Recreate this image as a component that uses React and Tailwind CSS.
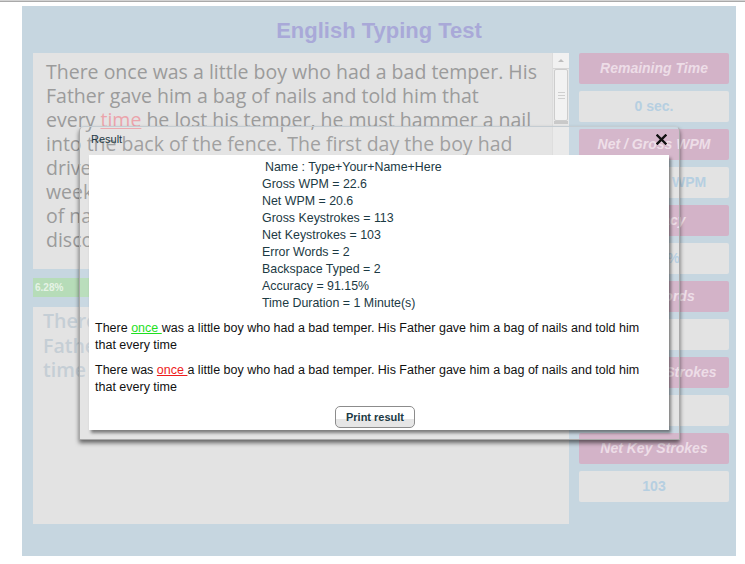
import React from 'react';

const stats = [
  'Gross WPM = 22.6',
  'Net WPM = 20.6',
  'Gross Keystrokes = 113',
  'Net Keystrokes = 103',
  'Error Words = 2',
  'Backspace Typed = 2',
  'Accuracy = 91.15%',
  'Time Duration = 1 Minute(s)',
];

const sideBoxes = [
  ['Remaining Time', '0 sec.'],
  ['Net / Gross WPM', '20.6 / 22.6 WPM'],
  ['Accuracy', '91.15 %'],
  ['Error Words', '2'],
  ['Gross Key Strokes', '113'],
  ['Net Key Strokes', '103'],
];

function Scrollbar() {
  return (
    <div className="w-[17px] flex flex-col bg-[#e9e9e9] border-l border-[#dcdcdc]">
      <div className="h-[16px] bg-[#f1f1f1] border-b border-[#d6d6d6] flex items-center justify-center">
        <div className="w-0 h-0 border-l-[3px] border-r-[3px] border-b-[3px] border-l-transparent border-r-transparent border-b-[#bdbdbd]" />
      </div>
      <div className="h-[52px] mx-[1px] bg-[#f2f2f2] border border-[#cdcdcd] rounded-[2px] flex flex-col items-center justify-center gap-[2px]">
        <div className="w-[7px] h-px bg-[#cfcfcf]" />
        <div className="w-[7px] h-px bg-[#cfcfcf]" />
        <div className="w-[7px] h-px bg-[#cfcfcf]" />
      </div>
      <div className="h-[3px] mx-[1px] bg-[#c9c9c9]" />
    </div>
  );
}

export default function App() {
  return (
    <div className="relative w-[745px] h-[564px] overflow-hidden bg-white" style={{ fontFamily: '"Liberation Sans", Arial, sans-serif' }}>
      {/* top strip */}
      <div className="h-[2px] bg-[#d3d3d3] border-b border-[#a9a9a9]" />

      {/* page panel (faded behind modal) */}
      <div className="ml-[22px] mt-[4px] w-[714px] h-[550px] bg-[#c6d6e0]">
        <h1 className="pt-[13px] h-[37px] text-center text-[22px] leading-[24px] font-bold text-[#a9a9d8]">
          English Typing Test
        </h1>
        <div className="mt-[10px] pl-[11px] flex gap-[10px]">
          <div className="w-[536px] flex flex-col">
            <div className="h-[216px] bg-[#e3e3e3] flex overflow-hidden">
              <div className="flex-1 pl-[13px] pt-[7px] text-[19.5px] leading-[24px] text-[#9b9b9b] whitespace-nowrap overflow-hidden" style={{ fontFamily: '"Open Sans", sans-serif' }}>
                <div>There once was a little boy who had a bad temper. His</div>
                <div>Father gave him a bag of nails and told him that</div>
                <div>
                  every <span className="text-[#eba4ab] underline">time</span> he lost his temper, he must hammer a nail
                </div>
                <div>into the back of the fence. The first day the boy had</div>
                <div>driven 37 nails into the fence. Over the next few</div>
                <div>weeks, as he learned to control his anger, the</div>
                <div>of nails hammered daily gradually dwindled down. He</div>
                <div>discovered it was easier to hold his temper than to</div>
              </div>
              <Scrollbar />
            </div>
            <div className="mt-[9px] h-[19px] w-[62px] bg-[#b6dcb8] flex items-center pl-[2px] text-[10px] font-bold text-[#e6f3e6]">
              6.28%
            </div>
            <div className="mt-[10px] h-[217px] bg-[#e3e3e3] pl-[10px] pt-[2px] text-[19.5px] leading-[24.5px] font-semibold text-[#c5ced5] whitespace-nowrap overflow-hidden" style={{ fontFamily: '"Open Sans", sans-serif' }}>
              <div>There once was a little boy who had a bad temper. His</div>
              <div>Father gave him a bag of nails and told him that every</div>
              <div>time</div>
            </div>
          </div>

          <div className="w-[150px] flex flex-col gap-[7px]">
            {sideBoxes.map(([label, value]) => (
              <React.Fragment key={label}>
                <div className="h-[31px] rounded-[2px] bg-[#d3b3c8] flex items-center justify-center text-[14px] font-bold italic text-[#eddde7]">
                  {label}
                </div>
                <div className="h-[31px] rounded-[2px] bg-[#e3e3e3] flex items-center justify-center text-[14px] font-bold text-[#b6cfe1]">
                  {value}
                </div>
              </React.Fragment>
            ))}
          </div>
        </div>
      </div>

      {/* Result dialog */}
      <div className="absolute left-[79px] top-[126px] w-[601px] h-[314px] border border-[#a9a9a9] border-t-[#c4ccd2] rounded-t-[5px] bg-white/5 px-[9px] shadow-[0_3px_4px_rgba(0,0,0,0.55)]">
        <div className="h-[28px] flex items-start justify-between pt-[6px]">
          <span className="ml-[2px] text-[11px] leading-[13px] text-[#1e3a44]">Result</span>
          <svg width="11" height="11" viewBox="0 0 11 11" className="mr-[3px] mt-[1px]">
            <path d="M1.5 1.5 L9.5 9.5 M9.5 1.5 L1.5 9.5" stroke="#111" strokeWidth="2.4" strokeLinecap="square" />
          </svg>
        </div>
        <div className="w-[580px] h-[275px] bg-white pt-[4px] shadow-[2px_3px_3px_rgba(0,0,0,0.45)]">
          <div className="pl-[173px] text-[12.4px] leading-[17px] text-[#1c3a44]">
            <div className="pl-[3px]">Name : Type+Your+Name+Here</div>
            {stats.map((s) => (
              <div key={s}>{s}</div>
            ))}
          </div>
          <p className="mt-[8px] px-[6px] text-[12.5px] leading-[17px] text-[#111] whitespace-nowrap">
            There <span className="text-[#1ee01e] underline">once </span>was a little boy who had a bad temper. His Father gave him a bag of nails and told him
            <br />
            that every time
          </p>
          <p className="mt-[8px] px-[6px] text-[12.5px] leading-[17px] text-[#111] whitespace-nowrap">
            There was <span className="text-[#ee1c1c] underline">once </span>a little boy who had a bad temper. His Father gave him a bag of nails and told him
            <br />
            that every time
          </p>
          <div className="mt-[8px] pl-[246px]">
            <button className="w-[80px] h-[22px] rounded-[5px] border border-[#8c8c8c] bg-[linear-gradient(#ffffff_0%,#ffffff_60%,#e6e6e6_61%,#e6e6e6_100%)] text-[11px] font-bold text-[#1c3a44]">
              Print result
            </button>
          </div>
        </div>
      </div>
    </div>
  );
}
